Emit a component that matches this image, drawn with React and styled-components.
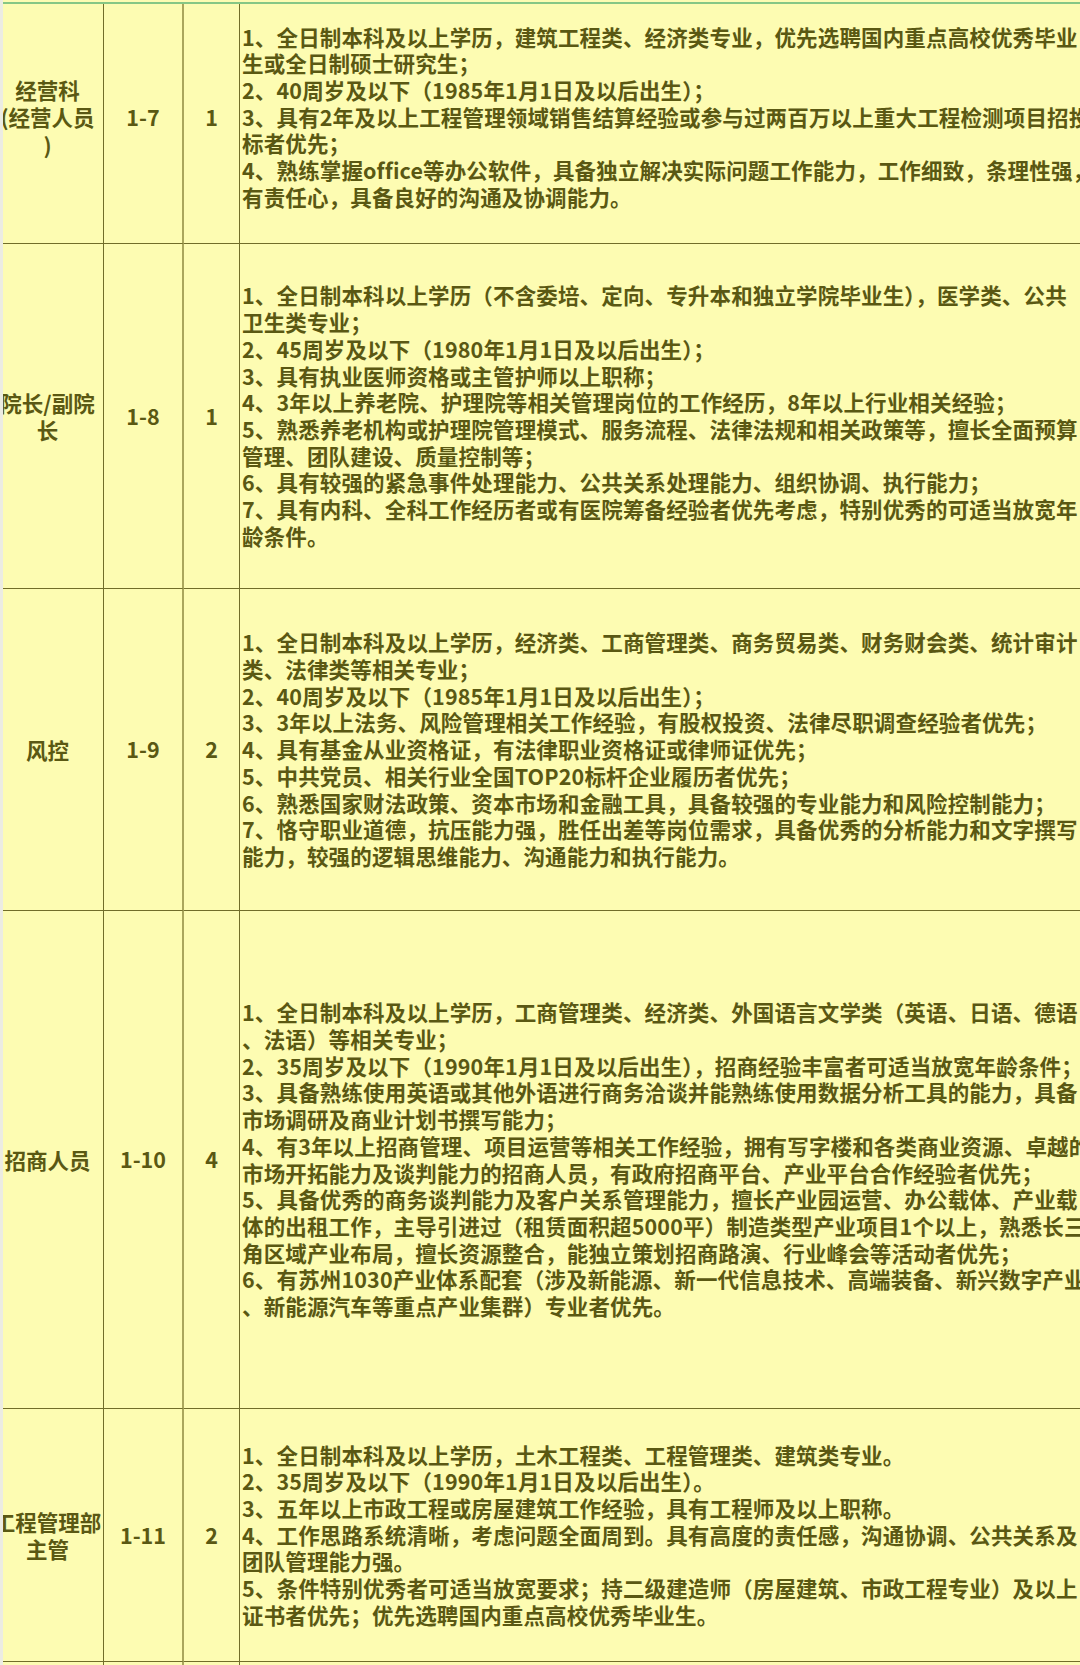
import React from "react";
import styled, { createGlobalStyle } from "styled-components";

const rows = [
  {
    name: ["经营科", "(经营人员", ")"],
    code: "1-7",
    count: 1,
    height: 253,
    lines: [
      "1、全日制本科及以上学历，建筑工程类、经济类专业，优先选聘国内重点高校优秀毕业",
      "生或全日制硕士研究生；",
      "2、40周岁及以下（1985年1月1日及以后出生）；",
      "3、具有2年及以上工程管理领域销售结算经验或参与过两百万以上重大工程检测项目招投",
      "标者优先；",
      "4、熟练掌握office等办公软件，具备独立解决实际问题工作能力，工作细致，条理性强，",
      "有责任心，具备良好的沟通及协调能力。",
    ],
  },
  {
    name: ["院长/副院", "长"],
    code: "1-8",
    count: 1,
    height: 345,
    lines: [
      "1、全日制本科以上学历（不含委培、定向、专升本和独立学院毕业生），医学类、公共",
      "卫生类专业；",
      "2、45周岁及以下（1980年1月1日及以后出生）；",
      "3、具有执业医师资格或主管护师以上职称；",
      "4、3年以上养老院、护理院等相关管理岗位的工作经历，8年以上行业相关经验；",
      "5、熟悉养老机构或护理院管理模式、服务流程、法律法规和相关政策等，擅长全面预算",
      "管理、团队建设、质量控制等；",
      "6、具有较强的紧急事件处理能力、公共关系处理能力、组织协调、执行能力；",
      "7、具有内科、全科工作经历者或有医院筹备经验者优先考虑，特别优秀的可适当放宽年",
      "龄条件。",
    ],
  },
  {
    name: ["风控"],
    code: "1-9",
    count: 2,
    height: 322,
    lines: [
      "1、全日制本科及以上学历，经济类、工商管理类、商务贸易类、财务财会类、统计审计",
      "类、法律类等相关专业；",
      "2、40周岁及以下（1985年1月1日及以后出生）；",
      "3、3年以上法务、风险管理相关工作经验，有股权投资、法律尽职调查经验者优先；",
      "4、具有基金从业资格证，有法律职业资格证或律师证优先；",
      "5、中共党员、相关行业全国TOP20标杆企业履历者优先；",
      "6、熟悉国家财法政策、资本市场和金融工具，具备较强的专业能力和风险控制能力；",
      "7、恪守职业道德，抗压能力强，胜任出差等岗位需求，具备优秀的分析能力和文字撰写",
      "能力，较强的逻辑思维能力、沟通能力和执行能力。",
    ],
  },
  {
    name: ["招商人员"],
    code: "1-10",
    count: 4,
    height: 498,
    lines: [
      "1、全日制本科及以上学历，工商管理类、经济类、外国语言文学类（英语、日语、德语",
      "、法语）等相关专业；",
      "2、35周岁及以下（1990年1月1日及以后出生），招商经验丰富者可适当放宽年龄条件；",
      "3、具备熟练使用英语或其他外语进行商务洽谈并能熟练使用数据分析工具的能力，具备",
      "市场调研及商业计划书撰写能力；",
      "4、有3年以上招商管理、项目运营等相关工作经验，拥有写字楼和各类商业资源、卓越的",
      "市场开拓能力及谈判能力的招商人员，有政府招商平台、产业平台合作经验者优先；",
      "5、具备优秀的商务谈判能力及客户关系管理能力，擅长产业园运营、办公载体、产业载",
      "体的出租工作，主导引进过（租赁面积超5000平）制造类型产业项目1个以上，熟悉长三",
      "角区域产业布局，擅长资源整合，能独立策划招商路演、行业峰会等活动者优先；",
      "6、有苏州1030产业体系配套（涉及新能源、新一代信息技术、高端装备、新兴数字产业",
      "、新能源汽车等重点产业集群）专业者优先。",
    ],
  },
  {
    name: ["工程管理部", "主管"],
    code: "1-11",
    count: 2,
    height: 253,
    lines: [
      "1、全日制本科及以上学历，土木工程类、工程管理类、建筑类专业。",
      "2、35周岁及以下（1990年1月1日及以后出生）。",
      "3、五年以上市政工程或房屋建筑工作经验，具有工程师及以上职称。",
      "4、工作思路系统清晰，考虑问题全面周到。具有高度的责任感，沟通协调、公共关系及",
      "团队管理能力强。",
      "5、条件特别优秀者可适当放宽要求；持二级建造师（房屋建筑、市政工程专业）及以上",
      "证书者优先；优先选聘国内重点高校优秀毕业生。",
    ],
  },
];

const App = () => {
  return (
    <Screen>
      <GlobalStyle />
      <Gutter />
      <Viewport>
        <Table>
          <colgroup>
            <Col $w={112} />
            <Col $w={80} />
            <Col $w={56} />
            <Col $w={1000} />
          </colgroup>
          <tbody>
            {rows.map((row) => (
              <Row key={row.code} $h={row.height}>
                <NameCell>
                  {row.name.map((part) => (
                    <Line key={part}>{part}</Line>
                  ))}
                </NameCell>
                <CodeCell>{row.code}</CodeCell>
                <CountCell>{row.count}</CountCell>
                <DescCell>
                  {row.lines.map((line, i) => (
                    <Line key={i}>{line}</Line>
                  ))}
                </DescCell>
              </Row>
            ))}
            <Row $h={30}>
              <NameCell />
              <CodeCell />
              <CountCell />
              <DescCell />
            </Row>
          </tbody>
        </Table>
      </Viewport>
    </Screen>
  );
};

export default App;

const GlobalStyle = createGlobalStyle`
  html, body {
    margin: 0;
    padding: 0;
    background: #fdfcb2;
  }
  body {
    width: 1080px;
    height: 1665px;
    overflow: hidden;
  }
`;

const Screen = styled.div`
  display: flex;
  width: 1080px;
  height: 1665px;
  overflow: hidden;
  background: #fdfcb2;
  color: #5a5813;
  font-family: "Noto Sans CJK SC", "Noto Sans", sans-serif;
  font-weight: 700;
`;

const Gutter = styled.div`
  flex: 0 0 3px;
  background: #ecece2;
`;

/* the frozen header edge: the first row scrolls up beneath it */
const Viewport = styled.div`
  flex: 1;
  overflow: hidden;
  margin-top: 2px;
  border-top: 2px solid #86c785;
`;

const Table = styled.table`
  border-collapse: separate;
  border-spacing: 0;
  table-layout: fixed;
  width: 1248px;
  margin-left: -11px;
  margin-top: -13px;
`;

const Col = styled.col`
  width: ${(p) => p.$w}px;
`;

const Row = styled.tr`
  height: ${(p) => p.$h}px;
`;

const Cell = styled.td`
  box-sizing: border-box;
  padding: 0;
  vertical-align: middle;
  border-bottom: 1.5px solid #716d29;
  border-right: 1.5px solid #716d29;
  font-size: 21.5px;
  line-height: 26.7px;
`;

const NameCell = styled(Cell)`
  text-align: center;
  line-height: 27.5px;
`;

const CodeCell = styled(Cell)`
  text-align: center;
  border-right: 2px solid #aaa65c;
`;

const CountCell = styled(Cell)`
  text-align: center;
`;

const DescCell = styled(Cell)`
  padding-left: 2px;
  text-align: left;
  letter-spacing: 0.15px;
`;

const Line = styled.span`
  display: block;
  white-space: nowrap;
`;
